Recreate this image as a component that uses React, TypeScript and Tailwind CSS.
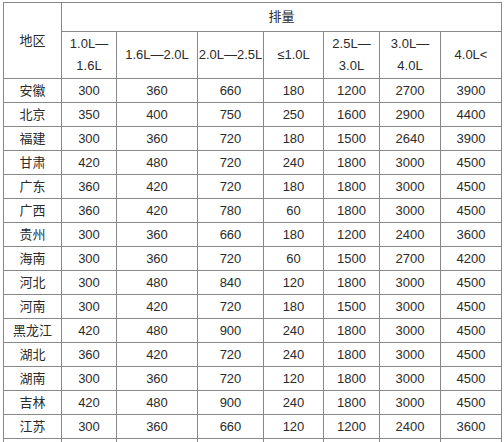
import React from "react";

const cols = [58, 55, 81, 66, 60, 56, 61, 61];

const rows: [string, ...number[]][] = [
  ["安徽", 300, 360, 660, 180, 1200, 2700, 3900],
  ["北京", 350, 400, 750, 250, 1600, 2900, 4400],
  ["福建", 300, 360, 720, 180, 1500, 2640, 3900],
  ["甘肃", 420, 480, 720, 240, 1800, 3000, 4500],
  ["广东", 360, 420, 720, 180, 1800, 3000, 4500],
  ["广西", 360, 420, 780, 60, 1800, 3000, 4500],
  ["贵州", 300, 360, 660, 180, 1200, 2400, 3600],
  ["海南", 300, 360, 720, 60, 1500, 2700, 4200],
  ["河北", 300, 480, 840, 120, 1800, 3000, 4500],
  ["河南", 300, 420, 720, 180, 1500, 3000, 4500],
  ["黑龙江", 420, 480, 900, 240, 1800, 3000, 4500],
  ["湖北", 360, 420, 720, 240, 1800, 3000, 4500],
  ["湖南", 300, 360, 720, 120, 1800, 3000, 4500],
  ["吉林", 420, 480, 900, 240, 1800, 3000, 4500],
  ["江苏", 300, 360, 660, 120, 1200, 2400, 3600],
];

const cell = "border border-[#888] p-0 text-center align-middle";

export default function App() {
  return (
    <div
      className="h-[442px] w-[504px] overflow-hidden bg-white text-[13px] text-[#2b2b2b]"
      style={{ fontFamily: '"Liberation Sans", "Noto Sans CJK SC", sans-serif' }}
    >
      <table className="ml-[3px] mt-[2px] table-fixed border-collapse">
        <colgroup>
          {cols.map((w, i) => (
            <col key={i} style={{ width: w }} />
          ))}
        </colgroup>
        <thead>
          <tr className="h-[29px]">
            <th rowSpan={2} className={`${cell} font-normal`}>
              地区
            </th>
            <th colSpan={7} className={`${cell} font-normal`}>
              排量
            </th>
          </tr>
          <tr className="h-[47px] leading-[22px]">
            <th className={`${cell} font-normal`}>
              1.0L—
              <br />
              1.6L
            </th>
            <th className={`${cell} font-normal`}>1.6L—2.0L</th>
            <th className={`${cell} font-normal whitespace-nowrap`}>2.0L—2.5L</th>
            <th className={`${cell} font-normal`}>≤1.0L</th>
            <th className={`${cell} font-normal`}>
              2.5L—
              <br />
              3.0L
            </th>
            <th className={`${cell} font-normal`}>
              3.0L—
              <br />
              4.0L
            </th>
            <th className={`${cell} font-normal`}>4.0L&lt;</th>
          </tr>
        </thead>
        <tbody>
          {rows.map(([name, ...vals]) => (
            <tr key={name} className="h-[24px]">
              <td className={cell}>{name}</td>
              {vals.map((v, i) => (
                <td key={i} className={cell}>
                  {v}
                </td>
              ))}
            </tr>
          ))}
          {/* next row only shows its top edge in the shot */}
          <tr className="h-[24px]">
            {cols.map((_, i) => (
              <td key={i} className={cell} />
            ))}
          </tr>
        </tbody>
      </table>
    </div>
  );
}
